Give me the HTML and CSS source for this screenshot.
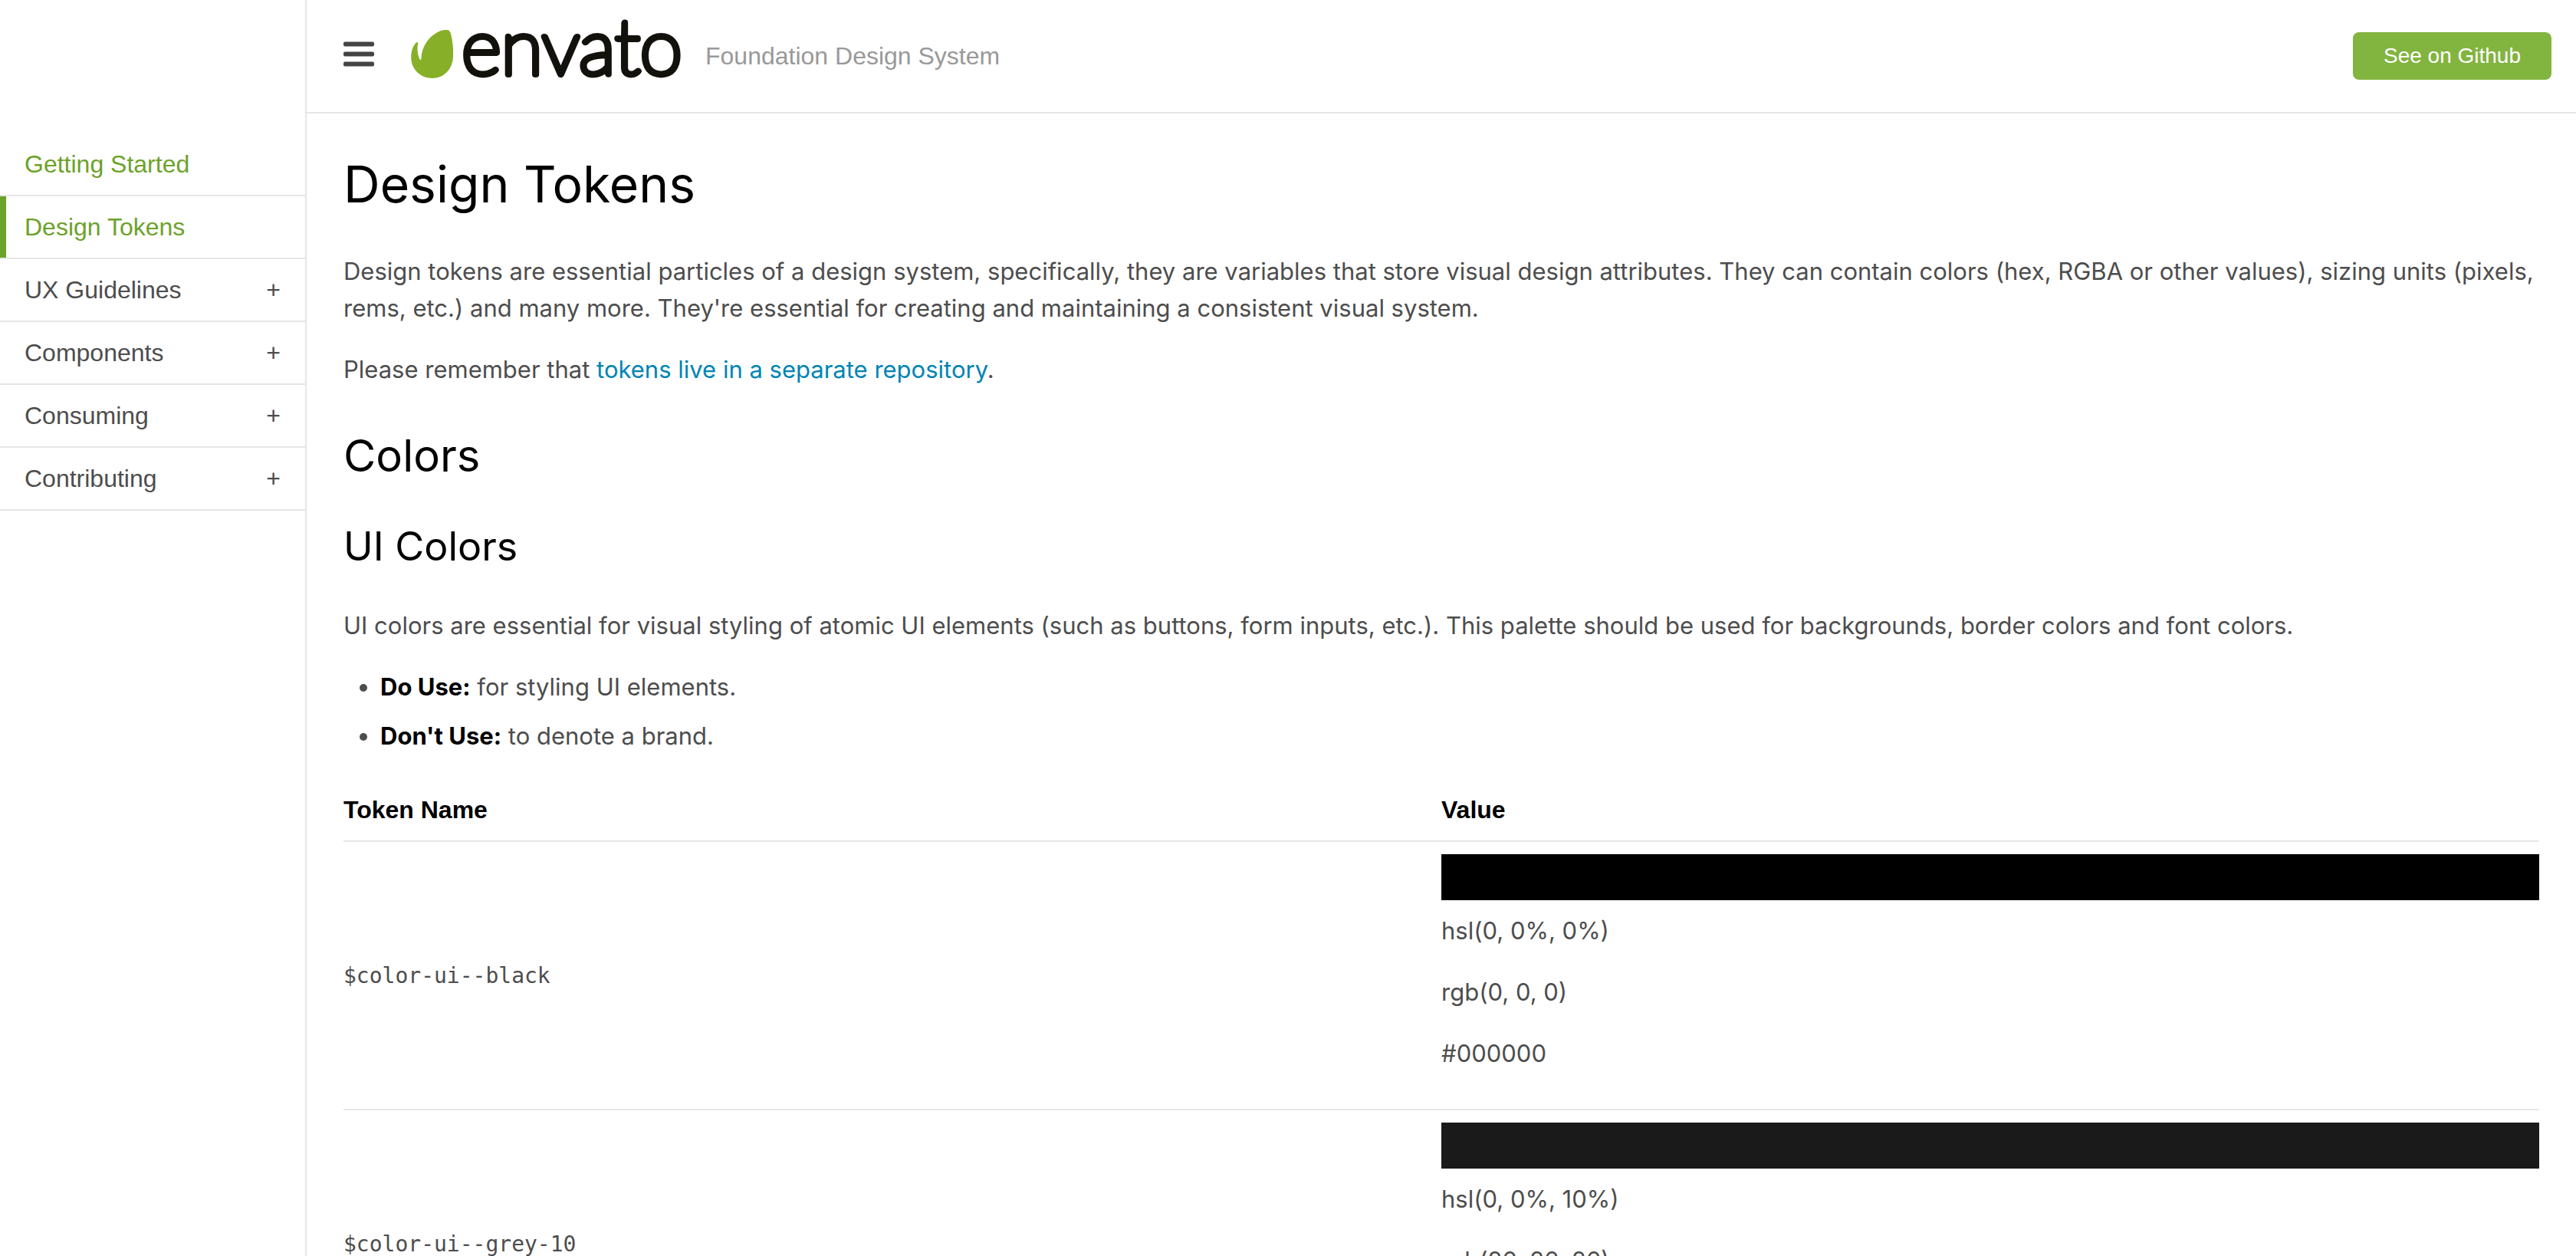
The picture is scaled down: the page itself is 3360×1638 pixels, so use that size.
FILE: index.html
```html
<!DOCTYPE html>
<html lang="en">
<head>
<meta charset="utf-8">
<meta name="viewport" content="width=device-width, initial-scale=1">
<title>Design Tokens</title>
<link rel="stylesheet" href="styles.css">
</head>
<body>
<div class="layout">
  <aside class="sidebar">
    <nav>
      <ul class="menu">
        <li><a class="menu__link menu__link--green" href="#">Getting Started</a></li>
        <li><a class="menu__link menu__link--green menu__link--active" href="#">Design Tokens</a></li>
        <li><a class="menu__link" href="#">UX Guidelines<span class="menu__plus">+</span></a></li>
        <li><a class="menu__link" href="#">Components<span class="menu__plus">+</span></a></li>
        <li><a class="menu__link" href="#">Consuming<span class="menu__plus">+</span></a></li>
        <li><a class="menu__link" href="#">Contributing<span class="menu__plus">+</span></a></li>
      </ul>
    </nav>
  </aside>
  <div class="page">
    <header class="header">
      <button class="burger" type="button" aria-label="Toggle menu">
        <svg width="40" height="38" viewBox="0 0 40 38" fill="#444" aria-hidden="true">
          <rect y="0.5" width="40" height="6" rx="2"/>
          <rect y="13.5" width="40" height="6" rx="2"/>
          <rect y="26.5" width="40" height="6" rx="2"/>
        </svg>
      </button>
      <a class="brand" href="#">
        <svg class="brand__logo" width="370" height="130" viewBox="0 -22 370 130" role="img" aria-label="envato">
          <path fill="#87b028" d="M33 13C39 9 44 9 47 9C50 9 51 11 52 14C54.500 24 55.500 33 55 44C54.500 60 43 72 28 72C12 72 0 60 .2 44C.4 36 3 29 7 25.500C8.600 24.500 9.500 25.500 9.200 27C7.600 35 9 42 11.600 47.500C12.600 49 13.200 48 13.400 46C14 31 23 18.500 33 13Z"/>
          <text class="brand__name" x="66" y="67">envato</text>
        </svg>
        <span class="brand__tagline">Foundation Design System</span>
      </a>
      <a class="button" href="#">See on Github</a>
    </header>
    <main class="content">
      <h1>Design Tokens</h1>
      <p>Design tokens are essential particles of a design system, specifically, they are variables that store visual design attributes. They can contain colors (hex, RGBA or other values), sizing units (pixels, rems, etc.) and many more. They're essential for creating and maintaining a consistent visual system.</p>
      <p>Please remember that <a href="#">tokens live in a separate repository</a>.</p>
      <h2>Colors</h2>
      <h3>UI Colors</h3>
      <p>UI colors are essential for visual styling of atomic UI elements (such as buttons, form inputs, etc.). This palette should be used for backgrounds, border colors and font colors.</p>
      <ul class="rules">
        <li><strong>Do Use:</strong> for styling UI elements.</li>
        <li><strong>Don't Use:</strong> to denote a brand.</li>
      </ul>
      <table class="tokens">
        <thead>
          <tr><th scope="col">Token Name</th><th scope="col">Value</th></tr>
        </thead>
        <tbody>
          <tr>
            <td><code>$color-ui--black</code></td>
            <td>
              <div class="swatch swatch--black"></div>
              <p>hsl(0, 0%, 0%)</p>
              <p>rgb(0, 0, 0)</p>
              <p>#000000</p>
            </td>
          </tr>
          <tr>
            <td><code>$color-ui--grey-10</code></td>
            <td>
              <div class="swatch swatch--grey-10"></div>
              <p>hsl(0, 0%, 10%)</p>
              <p>rgb(26, 26, 26)</p>
              <p>#1a1a1a</p>
            </td>
          </tr>
        </tbody>
      </table>
    </main>
  </div>
</div>
</body>
</html>
```
FILE: styles.css
```css
* { box-sizing: border-box; }

body {
  margin: 0;
  background: #fff;
  color: #4d4d4d;
  font-family: Inter, sans-serif;
  font-size: 31px;
  line-height: 48px;
}

a { color: #0084b4; text-decoration: none; }
ul { margin: 0; padding: 0; }

.layout {
  display: grid;
  grid-template-columns: 400px minmax(0, 1fr);
  min-height: 100vh;
}

/* Sidebar */
.sidebar {
  padding-top: 174px;
  border-right: 2px solid #e6e6e6;
  font-family: "Liberation Sans", sans-serif;
  font-size: 32px;
}

.menu { list-style: none; }

.menu__link {
  display: flex;
  justify-content: space-between;
  padding: 16px 32px;
  border-bottom: 2px solid #e6e6e6;
  color: #4d4d4d;
}

.menu__link--green { color: #6ca22a; }
.menu__link--active { box-shadow: inset 8px 0 #6ca22a; }

/* Header */
.header {
  display: flex;
  align-items: center;
  height: 148px;
  padding: 0 32px 0 48px;
  border-bottom: 2px solid #e6e6e6;
  font-family: "Liberation Sans", sans-serif;
}

.burger {
  display: flex;
  margin-right: 48px;
  padding: 0;
  border: 0;
  background: none;
}

.brand { display: flex; align-items: center; }

.brand__name {
  fill: #13110c;
  stroke: #13110c;
  stroke-width: 8px;
  stroke-linejoin: round;
  font-family: Lato, sans-serif;
  font-size: 100px;
  font-weight: 100;
}

.brand__tagline {
  margin-left: 14px;
  color: #999;
  font-size: 32px;
}

.button {
  margin-left: auto;
  padding: 7px 40px;
  border-radius: 8px;
  background: #82b440;
  color: #fff;
  font-size: 28px;
}

/* Content */
.content { padding: 48px; }

h1, h2, h3 { color: #000; font-weight: 400; }
h1 { margin: 0 0 46px; font-size: 66px; line-height: 88px; }
h2 { margin: 48px 0; font-size: 58px; line-height: 80px; }
h3 { margin: 48px 0; font-size: 52px; line-height: 62px; }
p { margin: 0 0 32px; }

.rules { margin-bottom: 32px; padding-left: 48px; }
.rules li + li { margin-top: 16px; }
strong { color: #000; }

.tokens {
  width: 100%;
  border-spacing: 0;
  table-layout: fixed;
}

.tokens th,
.tokens td {
  padding: 16px 0;
  border-bottom: 2px solid #e6e6e6;
}

.tokens th {
  color: #000;
  font: bold 32px/48px "Liberation Sans", sans-serif;
  text-align: left;
}

code { font-family: "DejaVu Sans Mono", monospace; font-size: 28px; }

.swatch { height: 60px; margin-bottom: 16px; }
.swatch--black { background: #000; }
.swatch--grey-10 { background: #1a1a1a; }
```
